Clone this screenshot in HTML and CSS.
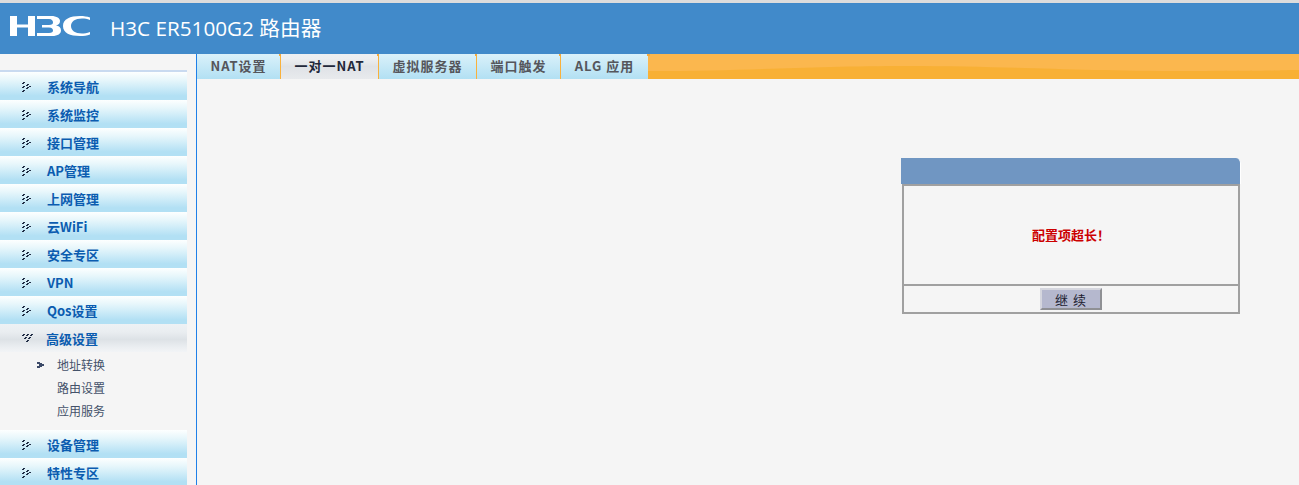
FILE: index.html
```html
<!DOCTYPE html>
<html lang="zh">
<head>
<meta charset="utf-8">
<title>H3C ER5100G2</title>
<link rel="stylesheet" href="styles.css">
</head>
<body>
<svg class="defs" width="0" height="0" aria-hidden="true">
  <symbol id="closed" viewBox="0 0 9 10"><path d="M1 0h2v1H1zM0 1h2v1H0zM5 2h2v1H5zM4 3h2v1H4zM7 4h2v1H7zM1 4h2v1H1zM0 5h2v1H0zM5 5h2v1H5zM4 6h2v1H4zM1 8h2v1H1zM0 9h2v1H0z"/></symbol>
  <symbol id="opened" viewBox="0 0 11 9"><path d="M1 0h2v1H1zM0 1h2v1H0zM5 0h2v1H5zM4 1h2v1H4zM9 0h2v1H9zM8 1h2v1H8zM3 3h2v1H3zM2 4h2v1H2zM7 3h2v1H7zM6 4h2v1H6zM5 6h2v1H5zM4 7h2v1H4z"/></symbol>
</svg>
<header class="top">
  <svg class="logo" width="82" height="24" viewBox="0 0 82 24" aria-label="H3C">
    <g fill="#fff">
      <path d="M1 1h7v8.500h11V1h7v20h-7v-8.500H8V21H1z"/>
      <path d="M28 1h14c6 0 9 2.500 9 5 0 2-1 4-4 4.500 3 .5 5 2 5 5 0 3-3 5.500-9 5.500H28v-3h12c3 0 4-1 4-2.500s-1-3-4-3h-7V10h7c3 0 4-1 4-2.500S43 4 40 4H28z"/>
      <path d="M81 2.500C78 1.500 75 1 71 1 61 1 54 4 54 11s7 10 17 10c4 0 7-.5 10-1.500V17c-3 1-6 1.500-8 1.500-7 0-11-3-11-7.500S66 3.500 73 3.500c3 0 5 .3 8 1.500z"/>
    </g>
  </svg>
  <h1 class="title">H3C ER5100G2 路由器</h1>
</header>
<div class="main">
  <nav class="side">
    <div class="side-line"></div>
    <a class="menu"><svg class="arrow"><use href="#closed"/></svg><span>系统导航</span></a>
    <a class="menu"><svg class="arrow"><use href="#closed"/></svg><span>系统监控</span></a>
    <a class="menu"><svg class="arrow"><use href="#closed"/></svg><span>接口管理</span></a>
    <a class="menu"><svg class="arrow"><use href="#closed"/></svg><span>AP管理</span></a>
    <a class="menu"><svg class="arrow"><use href="#closed"/></svg><span>上网管理</span></a>
    <a class="menu"><svg class="arrow"><use href="#closed"/></svg><span>云WiFi</span></a>
    <a class="menu"><svg class="arrow"><use href="#closed"/></svg><span>安全专区</span></a>
    <a class="menu"><svg class="arrow"><use href="#closed"/></svg><span>VPN</span></a>
    <a class="menu"><svg class="arrow"><use href="#closed"/></svg><span>Qos设置</span></a>
    <a class="menu open"><svg class="arrow-open"><use href="#opened"/></svg><span>高级设置</span></a>
    <ul class="sub">
      <li><svg class="cur" width="7" height="6" viewBox="0 0 7 6"><path d="M0 0h3v1h2v1h2v2H5v1H3v1H0V4h2V2H0z"/></svg>地址转换</li>
      <li>路由设置</li>
      <li>应用服务</li>
    </ul>
    <a class="menu"><svg class="arrow"><use href="#closed"/></svg><span>设备管理</span></a>
    <a class="menu"><svg class="arrow"><use href="#closed"/></svg><span>特性专区</span></a>
  </nav>
  <section class="content">
    <div class="tabbar">
      <div class="tabs">
        <a class="tab w84">NAT设置</a>
        <a class="tab active w98">一对一NAT</a>
        <a class="tab w98">虚拟服务器</a>
        <a class="tab w84">端口触发</a>
        <a class="tab w88">ALG 应用</a>
      </div>
      <svg class="wave" viewBox="0 0 651 25" preserveAspectRatio="none" aria-hidden="true">
        <path d="M0 17C100 17 160 12 260 12S420 17 540 17 620 16 651 16V25H0z" fill="#f8b035"/>
      </svg>
    </div>
    <div class="dialog-wrap">
      <div class="dialog">
        <div class="dialog-head"></div>
        <div class="dialog-box">
          <div class="dialog-msg">配置项超长！</div>
          <div class="dialog-foot"><button class="btn" type="button">继 续</button></div>
        </div>
      </div>
    </div>
  </section>
</div>
</body>
</html>
```
FILE: styles.css
```css
* { box-sizing: border-box; }
html, body { margin: 0; padding: 0; height: 100%; }
body {
  width: 1299px;
  height: 485px;
  overflow: hidden;
  background: #f5f5f5;
  font-family: "Noto Sans CJK SC", "Liberation Sans", sans-serif;
  border-top: 3px solid #dcdcdc;
}
.defs { position: absolute; }
.top {
  height: 51px;
  background: #418aca;
  display: flex;
  align-items: center;
  padding-left: 9px;
  border-top: 1px solid #3f88c9;
}
.logo { display: block; margin-top: -4px; }
.title {
  margin: -2px 0 0 19px;
  font-family: "Open Sans", "Noto Sans CJK SC", sans-serif;
  font-size: 20.700px;
  font-weight: 400;
  color: #fff;
  line-height: 24px;
}
.main { display: flex; height: 431px; }
.side {
  width: 197px;
  flex: none;
  padding-right: 9px;
  padding-top: 16px;
  border-right: 1px solid #1f80e8;
}
.side-line { height: 2px; background: #c9daf0; }
.menu {
  display: flex;
  align-items: center;
  height: 28px;
  padding: 0 0 0 22px;
  font-size: 13px;
  font-weight: 700;
  color: #0b5cb0;
  background: linear-gradient(#fdffff 0, #e6f6fb 30%, #b2e0f4 85%, #b2e0f4 100%);
}
.menu.open { background: linear-gradient(#eef2f5 0, #e9edf0 30%, #dde2e6 55%, #eceff2 85%, #f2f4f6 100%); }
.arrow { flex: none; width: 9px; height: 10px; margin: 2px 16px 0 0; fill: #1f2c44; }
.arrow-open { flex: none; width: 11px; height: 9px; margin: 0 13px 0 0; fill: #1f2c44; }
.sub {
  list-style: none;
  margin: 0;
  padding: 1px 0 0;
  height: 78px;
}
.sub li {
  position: relative;
  height: 23px;
  line-height: 23px;
  padding-left: 57px;
  font-size: 12px;
  color: #44526a;
}
.cur { position: absolute; left: 37px; top: 9px; fill: #3c4a68; }
.content { flex: 1; min-width: 0; }
.tabbar {
  position: relative;
  height: 25px;
  background: #fbb74e;
  display: flex;
}
.tabs { display: flex; position: relative; z-index: 1; }
.tab {
  position: relative;
  display: flex;
  align-items: center;
  justify-content: center;
  height: 25px;
  padding-bottom: 2px;
  font-size: 13px;
  font-weight: 700;
  letter-spacing: 1px;
  color: #55565c;
  background: linear-gradient(#daf1fa 0, #b2e0f3 100%);
  border-right: 1px solid #f9b13c;
}
.tab::after {
  content: "";
  position: absolute;
  top: 0;
  right: -2px;
  width: 3px;
  height: 2px;
  background: #f4a93c;
}
.tab.active { color: #22283a; background: linear-gradient(#eef0f2 0, #eceef0 20%, #dfe2e6 50%, #e8eaed 100%); }
.w84 { width: 84px; }
.w98 { width: 98px; }
.w88 { width: 87px; border-right: 0; }
.wave { position: absolute; bottom: 0; left: 451px; width: 651px; height: 25px; }
.dialog-wrap { padding: 79px 0 0 704px; }
.dialog { width: 340px; }
.dialog-head {
  height: 26px;
  background: #7096c2;
  border-right: 1px solid #fff;
  border-top-right-radius: 5px;
}
.dialog-box {
  margin-left: 1px;
  width: 338px;
  height: 130px;
  border: 2px solid #a0a0a0;
  display: flex;
  flex-direction: column;
}
.dialog-msg {
  height: 98px;
  padding: 0 0 2px 0;
  display: flex;
  align-items: center;
  justify-content: center;
  font-size: 13px;
  font-weight: 700;
  color: #cc0000;
}
.dialog-foot {
  flex: 1;
  border-top: 2px solid #a0a0a0;
  display: flex;
  justify-content: center;
  padding-top: 2px;
}
.btn {
  width: 62px;
  height: 22px;
  padding: 0;
  background: #b5b8ce;
  border: 2px solid;
  border-color: #d5d6de #8f9094 #8f9094 #d5d6de;
  font-family: "Noto Sans CJK SC", sans-serif;
  font-size: 13px;
  color: #1c1c30;
  letter-spacing: 1px;
}
```
